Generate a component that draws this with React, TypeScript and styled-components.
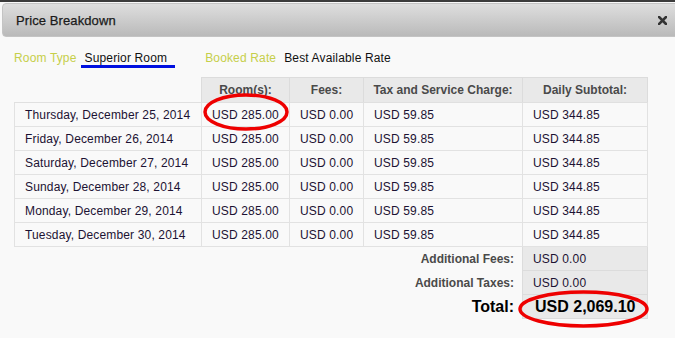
import styled, { createGlobalStyle } from 'styled-components';

const GlobalStyle = createGlobalStyle`
	html, body {
		margin: 0;
		padding: 0;
		background: #f9f9f9;
		font-family: Arial, "Liberation Sans", sans-serif;
	}
`;

type DayRow = {
	date: string;
	room: string;
	fees: string;
	tax: string;
	subtotal: string;
};

const days: DayRow[] = [
	{ date: 'Thursday, December 25, 2014', room: 'USD 285.00', fees: 'USD 0.00', tax: 'USD 59.85', subtotal: 'USD 344.85' },
	{ date: 'Friday, December 26, 2014', room: 'USD 285.00', fees: 'USD 0.00', tax: 'USD 59.85', subtotal: 'USD 344.85' },
	{ date: 'Saturday, December 27, 2014', room: 'USD 285.00', fees: 'USD 0.00', tax: 'USD 59.85', subtotal: 'USD 344.85' },
	{ date: 'Sunday, December 28, 2014', room: 'USD 285.00', fees: 'USD 0.00', tax: 'USD 59.85', subtotal: 'USD 344.85' },
	{ date: 'Monday, December 29, 2014', room: 'USD 285.00', fees: 'USD 0.00', tax: 'USD 59.85', subtotal: 'USD 344.85' },
	{ date: 'Tuesday, December 30, 2014', room: 'USD 285.00', fees: 'USD 0.00', tax: 'USD 59.85', subtotal: 'USD 344.85' },
];

const Page = styled.div`
	position: relative;
	width: 675px;
	height: 338px;
	overflow: hidden;
	border-top: 2px solid #3c3c3c;
	box-sizing: border-box;
	background: #f9f9f9;
`;

const TitleBar = styled.div`
	display: flex;
	align-items: center;
	justify-content: space-between;
	height: 34px;
	margin: 1px -4px 0 2px;
	padding: 0 11px 0 13px;
	border-radius: 4px 0 0 4px;
	border: 1px solid #c4c4c4;
	background: linear-gradient(#dedede, #bababa);
	box-sizing: border-box;

	h1 {
		margin: 0;
		font-size: 13px;
		font-weight: normal;
		letter-spacing: 0.1px;
		color: #1a1a1a;
		-webkit-text-stroke: 0.25px #1a1a1a;
	}
`;

const CloseButton = styled.svg`
	width: 9px;
	height: 9px;
`;

const Content = styled.div`
	padding: 14px 0 0 14px;
	letter-spacing: 0.15px;
`;

const InfoLine = styled.div`
	display: flex;
	align-items: baseline;
	font-size: 12px;
	height: 15px;
	margin-bottom: 11px;
`;

const InfoLabel = styled.span`
	color: #c6cf4a;
	margin-right: ${(p: { $gap: number }) => p.$gap}px;
`;

const InfoValue = styled.span<{ $marked?: boolean }>`
	color: #111;
	${(p) =>
		p.$marked &&
		`
		padding: 0 8px 0 4px;
		margin-left: -4px;
		margin-right: 30px;
		border-bottom: 3px solid #0010e0;
		line-height: 13px;
	`}
`;

const Table = styled.table`
	border-collapse: collapse;
	table-layout: fixed;
	width: 633px;
	font-size: 12px;
	color: #1c1233;
`;

const HeadCell = styled.th<{ $blank?: boolean }>`
	height: 24px;
	padding: 0;
	text-align: center;
	font-weight: bold;
	letter-spacing: 0;
	color: #4a4a4a;
	background: ${(p) => (p.$blank ? 'transparent' : '#e9e9e9')};
	border: ${(p) => (p.$blank ? 'none' : '1px solid #dcdcdc')};
	border-bottom: 1px solid #e0e0e0;
`;

const Cell = styled.td`
	height: 23px;
	padding: 0 0 0 10px;
	border: 1px solid #e2e2e2;
	white-space: nowrap;
`;

const SummaryLabel = styled.td<{ $big?: boolean }>`
	height: 23px;
	padding: 0 8px 0 0;
	text-align: right;
	font-weight: bold;
	letter-spacing: 0;
	font-size: ${(p) => (p.$big ? 16 : 12)}px;
	color: ${(p) => (p.$big ? '#000' : '#4a4a4a')};
`;

const SummaryValue = styled.td<{ $big?: boolean }>`
	height: 23px;
	padding: 0 0 0 ${(p) => (p.$big ? 12 : 10)}px;
	background: #e9e9e9;
	border: 1px solid #dcdcdc;
	font-weight: ${(p) => (p.$big ? 'bold' : 'normal')};
	font-size: ${(p) => (p.$big ? 16 : 12)}px;
	letter-spacing: ${(p) => (p.$big ? 0 : 0.15)}px;
	color: ${(p) => (p.$big ? '#000' : '#1c1233')};
`;

const Marker = styled.svg`
	position: absolute;
	pointer-events: none;
	overflow: visible;
`;

function RedCircle(props: { x: number; y: number; w: number; h: number }) {
	return (
		<Marker style={{ left: props.x, top: props.y }} width={props.w} height={props.h}>
			<ellipse
				cx={props.w / 2}
				cy={props.h / 2}
				rx={props.w / 2 - 2}
				ry={props.h / 2 - 2}
				fill="none"
				stroke="#ee0000"
				strokeWidth={3.5}
			/>
		</Marker>
	);
}

export default function App() {
	return (
		<Page>
			<GlobalStyle />
			<TitleBar>
				<h1>Price Breakdown</h1>
				<CloseButton viewBox="0 0 9 9">
					<path d="M1 1 L8 8 M8 1 L1 8" stroke="#333" strokeWidth={2.6} strokeLinecap="square" />
				</CloseButton>
			</TitleBar>
			<Content>
				<InfoLine>
					<InfoLabel $gap={8}>Room Type</InfoLabel>
					<InfoValue $marked>Superior Room</InfoValue>
					<InfoLabel $gap={8}>Booked Rate</InfoLabel>
					<InfoValue>Best Available Rate</InfoValue>
				</InfoLine>
				<Table>
					<colgroup>
						<col style={{ width: 187 }} />
						<col style={{ width: 88 }} />
						<col style={{ width: 74 }} />
						<col style={{ width: 159 }} />
						<col style={{ width: 125 }} />
					</colgroup>
					<thead>
						<tr>
							<HeadCell $blank />
							<HeadCell>Room(s):</HeadCell>
							<HeadCell>Fees:</HeadCell>
							<HeadCell>Tax and Service Charge:</HeadCell>
							<HeadCell>Daily Subtotal:</HeadCell>
						</tr>
					</thead>
					<tbody>
						{days.map((d) => (
							<tr key={d.date}>
								<Cell>{d.date}</Cell>
								<Cell>{d.room}</Cell>
								<Cell>{d.fees}</Cell>
								<Cell>{d.tax}</Cell>
								<Cell>{d.subtotal}</Cell>
							</tr>
						))}
						<tr>
							<SummaryLabel colSpan={4}>Additional Fees:</SummaryLabel>
							<SummaryValue>USD 0.00</SummaryValue>
						</tr>
						<tr>
							<SummaryLabel colSpan={4}>Additional Taxes:</SummaryLabel>
							<SummaryValue>USD 0.00</SummaryValue>
						</tr>
						<tr>
							<SummaryLabel colSpan={4} $big>Total:</SummaryLabel>
							<SummaryValue $big>USD 2,069.10</SummaryValue>
						</tr>
					</tbody>
				</Table>
			</Content>
			<RedCircle x={203} y={91} w={86} h={38} />
			<RedCircle x={518} y={288} w={131} h={38} />
		</Page>
	);
}
